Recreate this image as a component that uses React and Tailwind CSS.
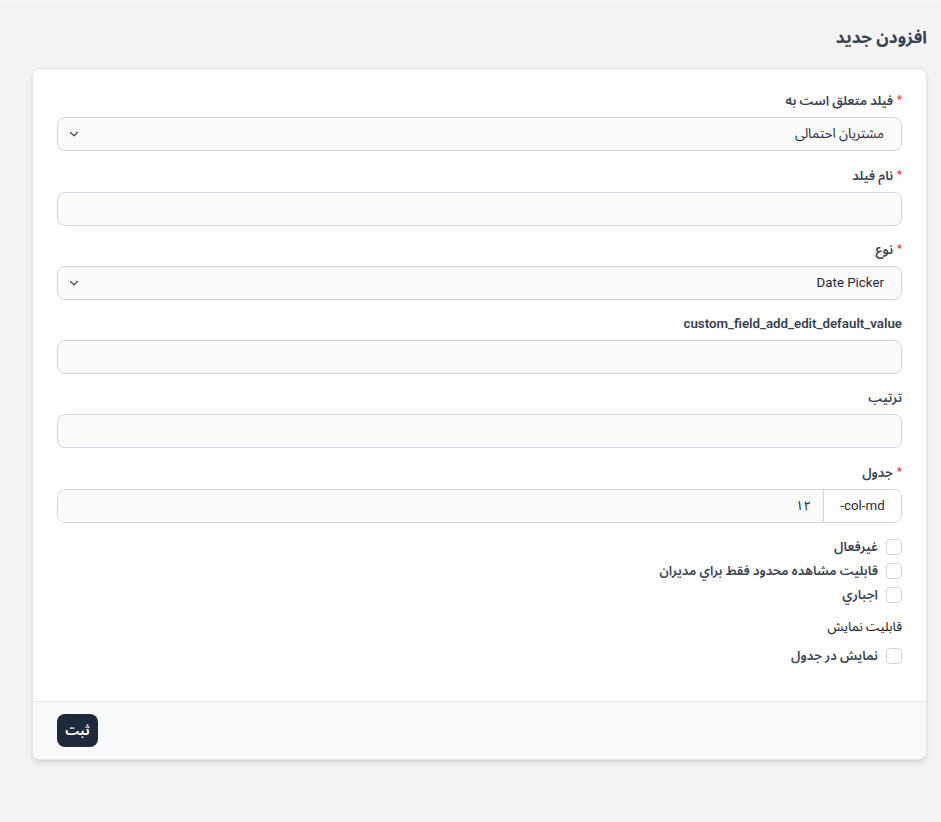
import React from "react";

function Chevron() {
  return (
    <svg width="12" height="12" viewBox="0 0 16 16" fill="none" stroke="#374151" strokeWidth="1.6" strokeLinecap="round" strokeLinejoin="round">
      <path d="M3.5 6l4.5 4.5L12.5 6" />
    </svg>
  );
}

function Label({ children, required, latin }) {
  return (
    <label className={`flex items-center gap-1 font-semibold text-[#374151] h-5 mb-[6px] ${latin ? "text-[13.3px] font-bold" : "text-[13px]"}`}>
      {required && <span className="text-red-500 text-[11px] leading-none -mt-1">*</span>}
      <span>{children}</span>
    </label>
  );
}

function SelectBox({ value }) {
  return (
    <div className="h-[34px] flex items-center justify-between rounded-lg border border-[#d4d4dc] bg-[#fafafa] pr-[17px] pl-[10px] text-[13.3px] text-[#1f2937]">
      <span>{value}</span>
      <Chevron />
    </div>
  );
}

function Input({ value }) {
  return (
    <div className="h-[34px] flex items-center rounded-lg border border-[#d4d4dc] bg-[#fafafa] px-3 text-[13px] text-[#1f2937]">
      {value}
    </div>
  );
}

function Check({ children }) {
  return (
    <div className="flex items-center gap-2 h-[16px] mb-[8px]">
      <span className="w-4 h-4 rounded-[4px] border border-[#d4d4dc] bg-white"></span>
      <span className="text-[13px] text-[#374151] font-semibold">{children}</span>
    </div>
  );
}

export default function App() {
  return (
    <div
      dir="rtl"
      className="min-h-[822px] bg-[#f3f3f3] border-t-2 border-[#f7f7f7] pt-[23px]"
      style={{ fontFamily: "Roboto, 'Noto Sans Arabic', 'Noto Naskh Arabic', 'DejaVu Sans Condensed', 'DejaVu Sans', sans-serif" }}
    >
      <div className="mr-[14px] ml-8">
        <h1 className="text-[17px] font-bold text-[#374151] h-6 leading-6 mb-[19px]">افزودن جدید</h1>
        <div className="bg-white rounded-lg border border-[#e5e7eb] shadow-md overflow-hidden">
          <div className="px-6 pt-[22px] pb-[29px]">
            <Label required>فیلد متعلق است به</Label>
            <SelectBox value="مشتریان احتمالی" />
            <div className="h-[15px]" />
            <Label required>نام فیلد</Label>
            <Input />
            <div className="h-[14px]" />
            <Label required>نوع</Label>
            <SelectBox value="Date Picker" />
            <div className="h-[14px]" />
            <Label latin>custom_field_add_edit_default_value</Label>
            <Input />
            <div className="h-[14px]" />
            <Label>ترتیب</Label>
            <Input />
            <div className="h-[15px]" />
            <Label required>جدول</Label>
            <div className="h-[34px] flex rounded-lg border border-[#d4d4dc] overflow-hidden text-[13.3px] text-[#1f2937]">
              <div dir="ltr" className="w-[78px] flex items-center justify-center bg-white border-l border-[#d4d4dc]">-col-md</div>
              <div className="flex-1 flex items-center px-3 bg-[#fafafa]">۱۲</div>
            </div>
            <div className="h-[16px]" />
            <Check>غیرفعال</Check>
            <Check>قابلیت مشاهده محدود فقط براي مديران</Check>
            <Check>اجباري</Check>
            <div className="text-[13px] text-[#111827] h-5 leading-5 mt-[14px] mb-[11px]">قابلیت نمایش</div>
            <Check>نمایش در جدول</Check>
          </div>
          <div className="bg-[#f8f9fb] border-t border-[#e5e7eb] px-6 pt-[12px] pb-[12px] flex justify-end">
            <button className="h-[33px] w-[41px] rounded-lg bg-[#1e293b] text-white text-[13px] font-bold">ثبت</button>
          </div>
        </div>
      </div>
    </div>
  );
}
